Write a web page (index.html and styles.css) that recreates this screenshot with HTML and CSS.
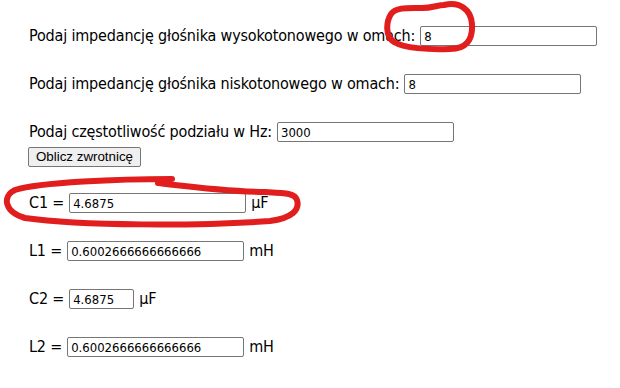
FILE: index.html
```html
<!DOCTYPE html>
<html lang="pl">
<head>
<meta charset="utf-8">
<title>Zwrotnica</title>
<link rel="stylesheet" href="styles.css">
</head>
<body>
<main class="page">
  <div class="row"><span class="label">Podaj impedancję głośnika wysokotonowego w omach:</span><input class="field" type="text" value="8"></div>
  <div class="row"><span class="label">Podaj impedancję głośnika niskotonowego w omach:</span><input class="field" type="text" value="8"></div>
  <div class="row row-tight"><span class="label">Podaj częstotliwość podziału w Hz:</span><input class="field" type="text" value="3000"></div>
  <div class="actions"><button class="btn" type="button">Oblicz zwrotnicę</button></div>
  <div class="row"><span class="label">C1 =</span><input class="field" type="text" value="4.6875"><span class="label">µF</span></div>
  <div class="row"><span class="label">L1 =</span><input class="field" type="text" value="0.6002666666666666"><span class="label">mH</span></div>
  <div class="row"><span class="label">C2 =</span><input class="field field-short" type="text" value="4.6875"><span class="label">µF</span></div>
  <div class="row"><span class="label">L2 =</span><input class="field" type="text" value="0.6002666666666666"><span class="label">mH</span></div>
</main>
<svg class="marks" width="620" height="388" viewBox="0 0 620 388" aria-hidden="true">
  <path d="M 444 5 C 460 1, 471 10, 472 24 C 473 40, 466 49, 450 49 C 428 50, 404 48, 394 42 C 385 36, 386 22, 391 14 C 396 7, 408 8, 422 8 C 432 8, 438 5, 444 5"/>
  <path d="M 172 179 C 120 179, 40 182, 15 190 C 2 196, 4 212, 25 218 C 80 226, 200 226, 270 221 C 292 218, 300 210, 297 200 C 295 193, 285 193, 265 192 C 220 191, 185 186, 158 183"/>
</svg>
</body>
</html>
```
FILE: styles.css
```css
html, body {
  margin: 0;
  padding: 0;
  background: #fff;
}
.page {
  padding: 26px 0 0 29px;
  font-family: "DejaVu Sans", Verdana, sans-serif;
  font-stretch: condensed;
  font-size: 16px;
  color: #000;
}
.row {
  display: flex;
  align-items: baseline;
  gap: 5px;
  height: 20px;
  margin-bottom: 28px;
}
.row-tight {
  margin-bottom: 4px;
}
.label {
  line-height: 16px;
  letter-spacing: -0.17px;
  white-space: nowrap;
}
.field {
  box-sizing: border-box;
  width: 177px;
  height: 20px;
  margin: 0;
  padding: 0 2px 0 3px;
  border: 1px solid #767676;
  border-radius: 2px;
  font-family: "DejaVu Sans", Verdana, sans-serif;
  font-stretch: condensed;
  font-size: 13px;
  color: #000;
  background: #fff;
}
.field-short {
  width: 65px;
}
.actions {
  height: 20px;
  margin-bottom: 27px;
}
.btn {
  box-sizing: border-box;
  height: 20px;
  width: 113px;
  margin: 0 0 0 -1px;
  padding: 0 6px;
  border: 1px solid #767676;
  border-radius: 2px;
  background: #efefef;
  font-family: "Liberation Sans", Arial, sans-serif;
  font-size: 13.33px;
  color: #000;
}
.marks {
  position: absolute;
  left: 0;
  top: 0;
  pointer-events: none;
  fill: none;
  stroke: #e11d1d;
  stroke-width: 6;
  stroke-linecap: round;
  stroke-linejoin: round;
}
```
